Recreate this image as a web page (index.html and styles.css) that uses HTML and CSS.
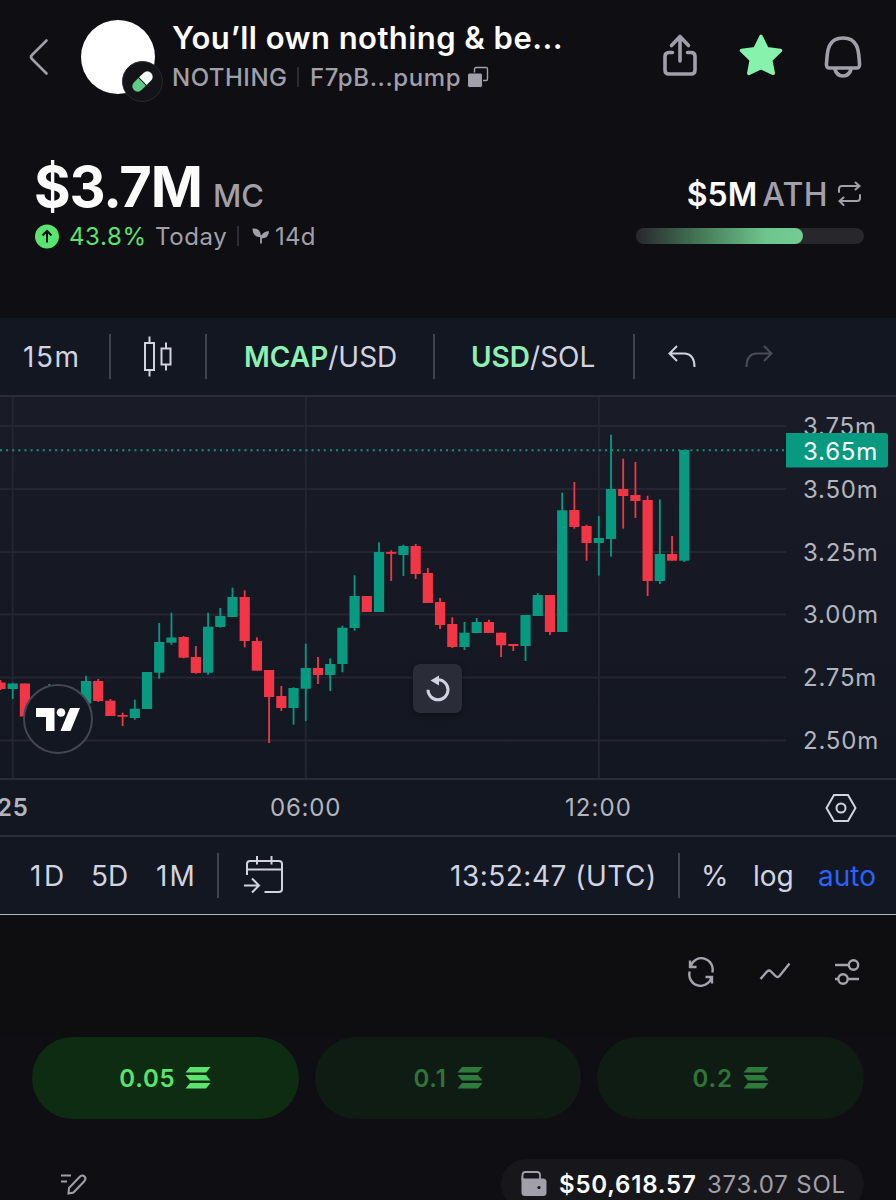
FILE: index.html
```html
<!DOCTYPE html>
<html lang="en">
<head>
  <meta charset="UTF-8">
  <meta name="viewport" content="width=device-width, initial-scale=1">
  <title>You’ll own nothing &amp; be...</title>
  <link rel="stylesheet" href="styles.css">
</head>
<body>
  <header class="header">
    <svg class="back" width="22" height="40" viewBox="0 0 22 40"><path d="M18.500 3.500L4 18Q2 20 4 22L18.500 36.500"/></svg>
    <div class="avatar">
      <span class="badge">
        <svg width="39" height="39" viewBox="0 0 40 40">
          <g transform="rotate(45 20 20)">
            <path d="M14.500 19.500V13a5.500 5.500 0 0 1 11 0v6.500z" fill="#f4fbf8"/>
            <path d="M14.500 20.500V27a5.500 5.500 0 0 0 11 0v-6.500z" fill="#5fcb88"/>
          </g>
        </svg>
      </span>
    </div>
    <div class="token">
      <h1>You’ll own nothing &amp; be...</h1>
      <div class="token-sub">
        <span class="ticker">NOTHING</span>
        <i class="bar"></i>
        <span class="address">F7pB...pump</span>
        <svg width="22" height="22" viewBox="0 0 22 22"><rect x="7.500" y="1.500" width="13" height="13" rx="1.500" fill="none" stroke="#a1a0aa" stroke-width="1.400"/><rect x=".5" y="7" width="15" height="14.500" rx="2" fill="#a1a0aa" stroke="#0e0e13" stroke-width="1"/></svg>
      </div>
    </div>
    <div class="actions">
      <svg width="44" height="50" viewBox="0 0 44 50"><path d="M22 31V6.500M13.500 15.500L22 6.500l8.500 9M14.500 22.500H11q-4 0-4 4V40q0 4 4 4h22q4 0 4-4V26.500q0-4-4-4h-3.500"/></svg>
      <svg class="star" width="44" height="50" viewBox="0 0 44 50"><path d="M22 6.500l6 12.200 13.500 1.800-9.800 9.500 2.500 13.300L22 37.500 9.800 43.300 12.300 30 2.500 20.500 16 18.700z"/></svg>
      <svg width="44" height="50" viewBox="0 0 44 50"><path d="M5.500 33C6.500 25 5 8 22 8S37.500 25 38.500 33Q39 38 36 38H8Q5 38 5.500 33zM13.500 38q2 8 8.500 8t8.500-8"/></svg>
    </div>
  </header>

  <section class="stats">
    <div class="cap">
      <div class="cap-main"><b>$3.7M</b><span>MC</span></div>
      <div class="cap-sub">
        <svg width="25" height="25" viewBox="0 0 25 25"><circle cx="12" cy="12.500" r="12" fill="#5be36f"/><path d="M12 18.500V7.500M7.500 11.500L12 7l4.500 4.500" fill="none" stroke="#0e0e13" stroke-width="2"/></svg>
        <span class="change">43.8%</span>
        <span class="today">Today</span>
        <i class="bar"></i>
        <svg class="sprout" width="18" height="18" viewBox="0 0 18 18"><path d="M.5 1.500q8.500-1 8.500 8.500-8.500 0-8.500-8.500zM17 4q0 7.500-8 7.500 0-7 8-7.500z" fill="#a1a0aa"/><path d="M9 8v8.500" stroke="#a1a0aa" stroke-width="1.800"/></svg>
        <span class="age">14d</span>
      </div>
    </div>
    <div class="ath">
      <div class="ath-main">
        <b>$5M</b><span>ATH</span>
        <svg width="26" height="26" viewBox="0 0 26 26"><path d="M2 11V8q0-3 3-3h17M18.500 1.500L22.500 5l-4 3.500M23 14v3q0 3-3 3H3M6.500 16.500L2.500 20l4 4"/></svg>
      </div>
      <div class="progress"><div class="progress-fill"></div></div>
    </div>
  </section>

  <section class="chart">
    <nav class="toolbar">
      <span class="interval">15m</span>
      <i class="sep"></i>
      <svg class="candle-icon" width="30" height="44" viewBox="0 0 30 44"><path d="M2 8h9v27H2zM6.500 1.500V8M6.500 35v6.500M18.500 13.500h9v16h-9zM23 7.500v6M23 29.500v6"/></svg>
      <i class="sep"></i>
      <span class="mcap"><b>MCAP</b>/USD</span>
      <i class="sep"></i>
      <span class="usd"><b>USD</b>/SOL</span>
      <i class="sep"></i>
      <svg class="undo" width="28" height="24" viewBox="0 0 28 24"><path d="M9 1L1.500 8.500 9 16M2 8.500h15q9.500 1 9.500 13.500"/></svg>
      <svg class="redo" width="28" height="24" viewBox="0 0 28 24"><path d="M19 1l7.500 7.500L19 16M26 8.500H11Q1.500 9.500 1.500 22"/></svg>
    </nav>

    <div class="plot">
      <svg width="896" height="381" viewBox="0 397 896 381">
        <path class="grid" d="M0 426H786M0 489H786M0 552H786M0 614.500H786M0 677.500H786M0 740.500H786M12.700 397V778M305.800 397V778M598.900 397V778"/>
        <path class="last" d="M0 450.300H786"/>
        <g id="candles"></g>
        <g class="price">
          <text x="803" y="434.500">3.75m</text>
          <text x="803" y="497.500">3.50m</text>
          <text x="803" y="560.500">3.25m</text>
          <text x="803" y="623">3.00m</text>
          <text x="803" y="686">2.75m</text>
          <text x="803" y="749">2.50m</text>
          <path d="M786 433h99q3 0 3 3v28.500q0 3-3 3h-99z"/>
          <text class="now" x="803" y="459.500">3.65m</text>
        </g>
      </svg>
      <div class="tv-logo">
        <svg width="44" height="23" viewBox="0 0 44 23"><path d="M0 0h18.500v23H10V9H0zM34 0h10l-9.500 23h-10z"/><circle cx="25" cy="4.500" r="4.300"/></svg>
      </div>
      <button class="reset">
        <svg width="26" height="28" viewBox="0 0 26 28"><path d="M3 14.800a10 10 0 1 0 10-10H11" fill="none" stroke="#d1d4e0" stroke-width="3"/><path d="M5.500 5.500L14 .5v10z" fill="#d1d4e0"/></svg>
      </button>
    </div>

    <div class="time-axis">
      <span class="day">25</span>
      <span class="t6">06:00</span>
      <span class="t12">12:00</span>
      <svg width="32" height="30" viewBox="0 0 32 30"><path d="M9 2h14l7.500 13L23 28H9L1.500 15z"/><circle cx="16" cy="15" r="4.500"/></svg>
    </div>

    <div class="ranges">
      <span class="d1">1D</span>
      <span class="d5">5D</span>
      <span class="m1">1M</span>
      <i class="sep"></i>
      <svg class="goto" width="42" height="40" viewBox="0 0 42 40"><path d="M4 19V8q0-3 3-3h29q3 0 3 3v25q0 3-3 3H21.500M4 13.500h35M14 0v8.500M28.500 0v8.500M1 29.500h15M9 22.500l7 7-7 7"/></svg>
      <span class="clock">13:52:47 (UTC)</span>
      <i class="sep"></i>
      <span class="percent">%</span>
      <span class="log">log</span>
      <span class="auto">auto</span>
    </div>
  </section>

  <div class="tools">
    <svg width="30" height="30" viewBox="0 0 30 30"><path d="M4.500 9.500A11.300 11.300 0 0 1 26.300 15.500M4 3.500v6.500h6.500M25.500 20.500A11.300 11.300 0 0 1 3.700 14.500M26 26.500V20h-6.500"/></svg>
    <svg width="32" height="30" viewBox="0 0 32 30"><path d="M1.500 22l6.500-7.500q2-2 4 0l4.500 4.500q2 2 4 0L30.500 6.500"/></svg>
    <svg width="26" height="30" viewBox="0 0 26 30"><path d="M1 8h13M1 22h3M14 22h11"/><circle cx="19.500" cy="8" r="4.700"/><circle cx="9" cy="22" r="4.700"/></svg>
  </div>

  <div class="amounts">
    <button class="amount active">0.05 <svg width="26" height="22" viewBox="0 0 26 22"><path d="M5 0h20.500l-4.500 5.500H.5zM.5 8H21l4.500 5.500H5zM5 16h20.500L21 21.500H.5z"/></svg></button>
    <button class="amount">0.1 <svg width="26" height="22" viewBox="0 0 26 22"><path d="M5 0h20.500l-4.500 5.500H.5zM.5 8H21l4.500 5.500H5zM5 16h20.500L21 21.500H.5z"/></svg></button>
    <button class="amount">0.2 <svg width="26" height="22" viewBox="0 0 26 22"><path d="M5 0h20.500l-4.500 5.500H.5zM.5 8H21l4.500 5.500H5zM5 16h20.500L21 21.500H.5z"/></svg></button>
  </div>

  <footer class="footer">
    <svg class="edit" width="28" height="22" viewBox="0 0 28 22"><path d="M1 2.500h10M1 8.500h6M9 15L20 3.500q2.500-2 4.500 0t0 4.500L13.500 19.500 8.500 20.500z"/></svg>
    <div class="wallet">
      <svg width="26" height="26" viewBox="0 0 26 26"><path d="M1.500 10V4q0-3 3-3H16q3 0 3 3v4" fill="none" stroke="#a1a0aa" stroke-width="1.800"/><path d="M.5 4.500Q1 7.500 4 7.500h18q3.500 0 3.500 3.500v10.500q0 3.500-3.500 3.500H4q-3.500 0-3.500-3.500z" fill="#a1a0aa"/><circle cx="18" cy="16.500" r="1.600" fill="#17161b"/></svg>
      <b>$50,618.57</b>
      <span>373.07 SOL</span>
    </div>
  </footer>

  <script src="script.js"></script>
</body>
</html>
```
FILE: styles.css
```css
* {
  box-sizing: border-box;
}
body {
  margin: 0;
  width: 896px;
  height: 1200px;
  overflow: hidden;
  background: #0e0e13;
  color: #a1a0aa;
  font-family: Inter, "Liberation Sans", sans-serif;
  white-space: nowrap;
}
svg {
  display: block;
  flex: none;
}
button {
  border: none;
  padding: 0;
  font-family: inherit;
}
.bar {
  width: 2px;
  height: 20px;
  background: #2c2c33;
}

/* header */
.header {
  display: flex;
  height: 140px;
  padding: 20px 30px 0 28px;
}
.back {
  margin-top: 17px;
}
.back path {
  fill: none;
  stroke: #a1a0aa;
  stroke-width: 2.6;
  stroke-linecap: round;
}
.avatar {
  position: relative;
  width: 74px;
  height: 74px;
  margin-left: 31px;
  border-radius: 50%;
  background: #fff;
}
.badge {
  position: absolute;
  left: 41px;
  top: 41px;
  width: 41px;
  height: 41px;
  border: 1px solid #2a2a2e;
  border-radius: 50%;
  background: #141418;
}
.token {
  width: 400px;
  margin-left: 17px;
}
h1 {
  margin: 0;
  color: #fff;
  font-size: 31px;
  line-height: 36px;
  font-weight: 600;
  letter-spacing: .45px;
}
.token-sub {
  display: flex;
  align-items: center;
  height: 30px;
  margin-top: 6px;
  font-size: 24px;
  font-weight: 500;
  letter-spacing: .5px;
}
.ticker {
  width: 125px;
}
.address {
  width: 157px;
  margin-left: 11px;
  letter-spacing: .6px;
}
.actions {
  display: flex;
  gap: 37px;
  margin-left: 86px;
  margin-top: 10px;
}
.actions path {
  fill: none;
  stroke: #a1a0aa;
  stroke-width: 3.6;
  stroke-linecap: round;
  stroke-linejoin: round;
}
.actions svg:last-child {
  margin-left: 1px;
}
.actions .star path {
  fill: #86f2ac;
  stroke: #86f2ac;
}

/* market cap and ath */
.stats {
  display: flex;
  justify-content: space-between;
  height: 178px;
  padding: 15px 32px 0 35px;
}
.cap-main {
  display: flex;
  align-items: baseline;
  height: 64px;
  line-height: 64px;
}
.cap-main b {
  width: 178px;
  margin-left: -1px;
  color: #fbfbfc;
  font-size: 56px;
  font-weight: 700;
  letter-spacing: -1.2px;
}
.cap-main span {
  margin-left: 1px;
  font-size: 31px;
  font-weight: 500;
}
.cap-sub {
  display: flex;
  align-items: center;
  height: 34px;
  font-size: 24px;
  letter-spacing: .6px;
}
.change {
  width: 86px;
  margin-left: 9px;
  color: #5be36f;
}
.today {
  width: 82px;
}
.sprout {
  margin-left: 13px;
}
.age {
  margin-left: 5px;
  letter-spacing: .3px;
}
.ath {
  width: 228px;
  padding-top: 19px;
}
.ath-main {
  display: flex;
  align-items: center;
  justify-content: flex-end;
  height: 40px;
  padding-right: 1px;
  font-size: 32px;
}
.ath-main b {
  color: #fff;
  font-weight: 600;
}
.ath-main span {
  margin-left: 5px;
  font-weight: 500;
  letter-spacing: .4px;
}
.ath-main svg {
  margin-left: 9px;
}
.ath-main path {
  fill: none;
  stroke: #a1a0aa;
  stroke-width: 2;
  stroke-linecap: round;
}
.progress {
  height: 16px;
  margin-top: 14px;
  border-radius: 8px;
  background: #27272c;
}
.progress-fill {
  width: 73.3%;
  height: 16px;
  border-radius: 8px;
  background: linear-gradient(90deg, #27272c, #48805b 42%, #6fc58d 78%, #73cc93);
}

/* chart */
.chart {
  height: 597px;
  border-bottom: 1px solid #b4b6be;
  background: #131721;
  color: #d1d4e0;
}
.sep {
  flex: none;
  width: 2px;
  height: 45px;
  background: #41444f;
}
.toolbar {
  display: flex;
  align-items: center;
  height: 79px;
  padding-left: 23px;
  border-bottom: 2px solid #2a2d37;
  font-size: 28px;
}
.toolbar b {
  color: #8df0b2;
  font-weight: 600;
}
.toolbar path {
  fill: none;
  stroke: #d1d4e0;
  stroke-width: 2;
}
.interval {
  width: 86px;
  letter-spacing: 1.6px;
}
.candle-icon {
  margin: 0 32px;
}
.mcap {
  width: 189px;
  margin-left: 37px;
}
.usd {
  width: 162px;
  margin-left: 36px;
}
.undo {
  margin-left: 33px;
}
.redo {
  margin-left: 49px;
}
.toolbar .redo path {
  stroke: #4a4d58;
}
.plot {
  position: relative;
  height: 381px;
  background: linear-gradient(#191b27, #131721);
}
.grid {
  stroke: #242732;
  stroke-width: 1.8;
}
.last {
  stroke: #089981;
  stroke-width: 2;
  stroke-dasharray: 2 4.110;
}
.up {
  fill: #089981;
}
.down {
  fill: #f23645;
}
.price text {
  fill: #b2b5be;
  font-size: 24px;
  letter-spacing: .8px;
}
.price path {
  fill: #089981;
}
.price .now {
  fill: #fff;
}
.tv-logo {
  position: absolute;
  left: 23px;
  top: 287px;
  display: flex;
  align-items: center;
  justify-content: center;
  width: 70px;
  height: 70px;
  border: 2px solid #444751;
  border-radius: 50%;
  background: #131721;
  fill: #fff;
}
.reset {
  position: absolute;
  left: 413px;
  top: 267px;
  display: flex;
  align-items: center;
  justify-content: center;
  width: 49px;
  height: 49px;
  border-radius: 7px;
  background: #2a2d38;
  box-shadow: 0 2px 5px rgba(0, 0, 0, .4);
}
.time-axis {
  display: flex;
  align-items: center;
  height: 59px;
  border-top: 2px solid #2a2d37;
  border-bottom: 2px solid #2a2d37;
  color: #b2b5be;
  font-size: 24px;
  letter-spacing: .8px;
}
.day {
  width: 273px;
  margin-left: -3px;
  font-weight: 600;
}
.t6 {
  width: 295px;
}
.t12 {
  width: 260px;
  letter-spacing: 1.1px;
}
.time-axis path, .time-axis circle {
  fill: none;
  stroke: #d1d4e0;
  stroke-width: 2;
}
.ranges {
  display: flex;
  align-items: center;
  height: 77px;
  padding-left: 30px;
  font-size: 28px;
}
.d1 {
  width: 61px;
  letter-spacing: 2.5px;
}
.d5 {
  width: 65px;
}
.m1 {
  width: 61px;
  letter-spacing: 2px;
}
.goto {
  margin-left: 24px;
}
.goto path {
  fill: none;
  stroke: #d1d4e0;
  stroke-width: 2;
}
.clock {
  width: 228px;
  margin-left: 165px;
  letter-spacing: .5px;
}
.percent {
  width: 52px;
  margin-left: 21px;
}
.log {
  width: 65px;
}
.auto {
  color: #2962ff;
}

/* trade panel */
.tools {
  display: flex;
  justify-content: flex-end;
  gap: 43px;
  height: 122px;
  padding: 42px 36px 0 0;
  background: #0e0e11;
}
.tools path, .tools circle {
  fill: none;
  stroke: #a5a4ac;
  stroke-width: 2.4;
}
.amounts {
  display: flex;
  gap: 16px;
  padding: 0 32px;
}
.amount {
  display: flex;
  flex: 1;
  align-items: center;
  justify-content: center;
  gap: 10px;
  height: 82px;
  border-radius: 41px;
  background: #0f1c13;
  color: #2f7439;
  font-size: 24px;
  font-weight: 600;
  letter-spacing: .8px;
}
.amount svg {
  fill: #2f7a3d;
}
.active {
  background: #0e2c12;
  color: #5be36f;
}
.active svg {
  fill: #5be36f;
}
.footer {
  display: flex;
  justify-content: space-between;
  padding: 40px 32px 0 60px;
}
.edit {
  margin-top: 14px;
}
.edit path {
  fill: none;
  stroke: #a1a0aa;
  stroke-width: 2;
}
.wallet {
  display: flex;
  align-items: center;
  width: 363px;
  height: 50px;
  padding-left: 20px;
  border-radius: 25px;
  background: #17161b;
  font-size: 24px;
  letter-spacing: .8px;
}
.wallet b {
  width: 148px;
  margin-left: 12px;
  color: #fff;
  font-weight: 600;
}
```
FILE: script.js
```js
// [direction, high, open/close top, open/close bottom, low], 15 minutes apart
const candles = [
  ["down", 680, 682.5, 689, 690], ["up", 683, 683.5, 689, 699], ["down", 683.5, 683.5, 716.5, 716.5],
  ["down", 700, 700, 710, 710], ["up", 684, 690, 710, 712], ["down", 695, 700, 712, 712],
  ["up", 695, 700, 712, 712], ["up", 675.7, 681, 703.5, 703.5], ["down", 679, 681, 701, 702],
  ["down", 699, 700.7, 716, 716], ["down", 712.7, 715, 716.7, 726], ["up", 699.7, 708.7, 718, 719.7],
  ["up", 672, 672, 709, 709], ["up", 623, 642, 672.7, 678.7], ["up", 612.7, 637.5, 642.7, 644.7],
  ["down", 636, 637, 657.7, 658.3], ["down", 646, 657, 673, 673.7], ["up", 612.7, 626.7, 672.7, 674.7],
  ["up", 608, 616, 627, 627.7], ["up", 587.7, 597, 617, 617], ["down", 590.3, 597, 641, 647.3],
  ["down", 637.3, 641, 670.7, 670.7], ["down", 670, 670, 697, 743], ["down", 686, 696, 708, 711],
  ["up", 687.3, 688, 708, 724.7], ["up", 643.7, 668, 688.7, 721], ["down", 657, 668, 675, 684],
  ["up", 658.3, 664, 675, 691], ["up", 625.7, 627.7, 664, 672.3], ["up", 575.3, 596, 628, 630.7],
  ["down", 596, 596, 612, 612], ["up", 542.3, 552, 612, 612], ["down", 550.3, 552, 553.8, 581],
  ["up", 544.7, 546, 555, 576], ["down", 544, 546, 574, 579], ["down", 568, 573, 603, 603],
  ["down", 598, 602, 625, 629], ["down", 617.3, 624, 647, 648], ["up", 622, 632.7, 647, 650],
  ["up", 618, 622, 633, 633], ["down", 619.7, 622, 633, 633], ["down", 632.7, 632.7, 645.3, 657],
  ["down", 644, 644, 646, 651], ["up", 615, 615, 646, 661], ["up", 593, 595, 616, 616],
  ["down", 595, 595, 632, 635], ["up", 492.7, 510.3, 632, 632], ["down", 482, 510, 527, 528.7],
  ["down", 524.7, 526, 543, 560.7], ["up", 516, 538, 543, 575.7], ["up", 434.7, 489, 539, 556.7],
  ["down", 458.7, 489, 496, 528.7], ["down", 462, 495, 501, 518], ["down", 495.7, 500, 581, 596],
  ["up", 499.3, 554, 581, 584], ["down", 536, 554, 560.7, 560.7], ["up", 450, 450, 560.7, 562]
];

const group = document.getElementById("candles");

function addRect(cls, x, y, width, height) {
  const rect = document.createElementNS("http://www.w3.org/2000/svg", "rect");
  rect.setAttribute("class", cls);
  rect.setAttribute("x", x);
  rect.setAttribute("y", y);
  rect.setAttribute("width", width);
  rect.setAttribute("height", height);
  group.appendChild(rect);
}

candles.forEach(function (c, i) {
  const x = 0.5 + i * 12.21;
  addRect(c[0], x - 0.9, c[1], 1.8, c[4] - c[1]);
  addRect(c[0], x - 5.1, c[2], 10.2, c[3] - c[2]);
});
```
